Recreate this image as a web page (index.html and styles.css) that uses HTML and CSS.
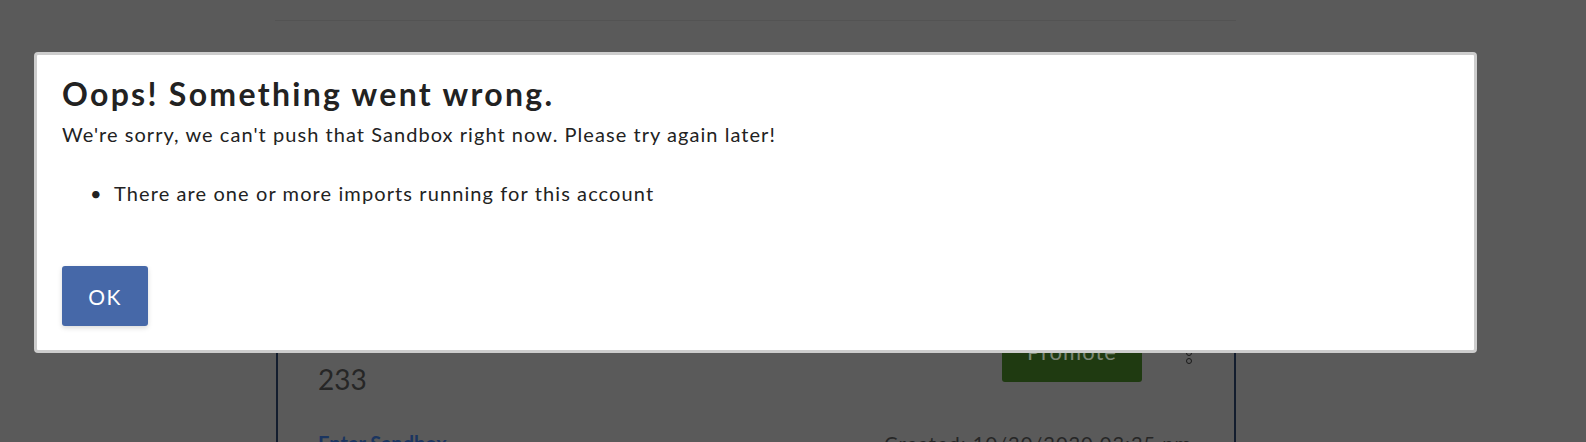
FILE: index.html
```html
<!DOCTYPE html>
<html lang="en">
    <head>
        <meta charset="UTF-8">
        <title>Sandboxes</title>
        <link rel="stylesheet" href="styles.css">
    </head>

    <body class="page">
        <div class="page__rule"></div>

        <section class="sandbox">
            <div class="sandbox__head">
                <div class="sandbox__name">233</div>
                <div class="sandbox__actions">
                    <button class="sandbox__promote" type="button">Promote</button>
                    <span class="sandbox__menu">
                        <span class="sandbox__menu__dot"></span>
                        <span class="sandbox__menu__dot"></span>
                        <span class="sandbox__menu__dot"></span>
                    </span>
                </div>
            </div>
            <div class="sandbox__foot">
                <a class="sandbox__link" href="#">Enter Sandbox</a>
                <span class="sandbox__created">Created: 10/20/2020 03:25 pm</span>
            </div>
        </section>

        <div class="dialog" role="alertdialog">
            <h1 class="dialog__title">Oops! Something went wrong.</h1>
            <p class="dialog__text">We're sorry, we can't push that Sandbox right now. Please try again later!</p>
            <ul class="dialog__errors">
                <li class="dialog__errors__entry">There are one or more imports running for this account</li>
            </ul>
            <button class="dialog__ok" type="button">OK</button>
        </div>
    </body>
</html>
```

FILE: styles.css
```css
html,
body {
    border: none;
    height: 100%;
    margin: 0 0 0 0;
    padding: 0 0 0 0;
    width: 100%;
}

:root {
    --color-backdrop: #5a5a5a;
    --color-backdrop-line: #535353;
    --color-card-border: #131d2e;
    --color-card-text: #262626;
    --color-card-link: #1b3560;
    --color-promote: #1f3a11;
    --color-promote-font: #7b8775;

    --color-dialog-border: #cdcdcd;
    --color-dialog-font: #222222;
    --color-button: #4668a8;
    --color-button-font: #ffffff;
}

.page {
    background-color: var(--color-backdrop);
    font-family: "Lato", "Open Sans", sans-serif;
    overflow: hidden;
    position: relative;
}

.page__rule {
    background-color: var(--color-backdrop-line);
    height: 1px;
    margin: 20px 0 0 275px;
    width: 961px;
}

.sandbox {
    border-left: 2px solid var(--color-card-border);
    border-right: 2px solid var(--color-card-border);
    box-sizing: border-box;
    margin: 279px 0 0 276px;
    padding: 20px 42px 0 40px;
    width: 960px;
}

.sandbox__head {
    align-items: flex-start;
    display: flex;
    justify-content: space-between;
}

.sandbox__name {
    color: var(--color-card-text);
    font-size: 28px;
    line-height: 34px;
    margin-top: 42px;
}

.sandbox__actions {
    align-items: flex-start;
    display: flex;
    gap: 44px;
}

.sandbox__promote {
    background-color: var(--color-promote);
    border: none;
    border-radius: 3px;
    color: var(--color-promote-font);
    font-family: inherit;
    font-size: 22px;
    height: 62px;
    letter-spacing: 1px;
    width: 140px;
}

.sandbox__menu {
    display: flex;
    flex-direction: column;
    gap: 2px;
    margin-top: 22px;
}

.sandbox__menu__dot {
    border: 1.5px solid #1a1a1a;
    border-radius: 50%;
    height: 4px;
    width: 4px;
}

.sandbox__foot {
    display: flex;
    font-size: 20px;
    justify-content: space-between;
    line-height: 24px;
    margin-top: 35px;
}

.sandbox__link {
    color: var(--color-card-link);
    font-weight: bold;
    text-decoration: none;
}

.sandbox__created {
    color: var(--color-card-text);
    letter-spacing: 1px;
}

.dialog {
    background-color: #ffffff;
    border: 3px solid var(--color-dialog-border);
    border-radius: 4px;
    box-sizing: border-box;
    color: var(--color-dialog-font);
    height: 301px;
    left: 34px;
    padding: 19px 25px 0 25px;
    position: absolute;
    top: 52px;
    width: 1443px;
}

.dialog__title {
    font-size: 32px;
    font-weight: bold;
    letter-spacing: 2.3px;
    line-height: 40px;
    margin: 0 0 6px 0;
}

.dialog__text {
    font-size: 20px;
    letter-spacing: 1.05px;
    line-height: 28px;
    margin: 0 0 0 0;
}

.dialog__errors {
    font-size: 20px;
    letter-spacing: 1.1px;
    line-height: 28px;
    list-style: none;
    margin: 31px 0 0 0;
    padding: 0 0 0 28px;
}

.dialog__errors__entry::before {
    content: "•";
    display: inline-block;
    letter-spacing: 0;
    width: 24px;
}

.dialog__ok {
    background-color: var(--color-button);
    border: none;
    border-radius: 3px;
    box-shadow: 0 2px 5px rgba(0, 0, 0, 0.15);
    color: var(--color-button-font);
    font-family: inherit;
    font-size: 21px;
    height: 60px;
    letter-spacing: 1.5px;
    margin-top: 59px;
    width: 86px;
}
```
